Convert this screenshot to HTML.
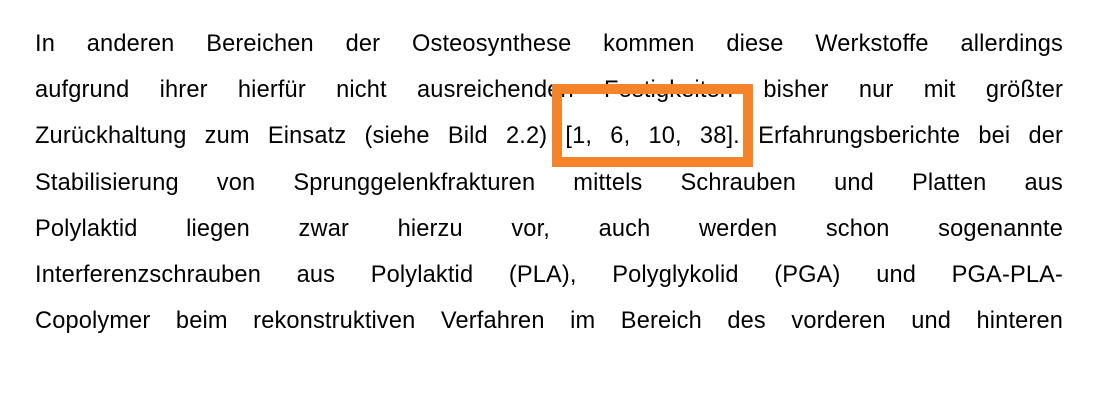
<!DOCTYPE html>
<html><head><meta charset="utf-8"><style>
html,body{margin:0;padding:0;background:#fff;}
body{width:1115px;height:402px;position:relative;overflow:hidden;font-family:"Liberation Sans",Arial,sans-serif;font-size:23.6px;color:#000;}
.l{position:absolute;left:35px;width:1028px;text-align:justify;text-align-last:justify;white-space:nowrap;height:30px;line-height:30px;letter-spacing:0.15px;}
.box{position:absolute;left:552px;top:84px;width:181px;height:63px;border:10px solid #F5832A;}
</style></head><body>
<div class="l" style="top:29px">In anderen Bereichen der Osteosynthese kommen diese Werkstoffe allerdings</div>
<div class="l" style="top:75px">aufgrund ihrer hierfür nicht ausreichenden Festigkeiten bisher nur mit größter</div>
<div class="l" style="top:121px">Zurückhaltung zum Einsatz (siehe Bild 2.2) [1, 6, 10, 38]. Erfahrungsberichte bei der</div>
<div class="l" style="top:168px">Stabilisierung von Sprunggelenkfrakturen mittels Schrauben und Platten aus</div>
<div class="l" style="top:214px">Polylaktid liegen zwar hierzu vor, auch werden schon sogenannte</div>
<div class="l" style="top:260px">Interferenzschrauben aus Polylaktid (PLA), Polyglykolid (PGA) und PGA-PLA-</div>
<div class="l" style="top:306px">Copolymer beim rekonstruktiven Verfahren im Bereich des vorderen und hinteren</div>
<div class="box"></div>
</body></html>
